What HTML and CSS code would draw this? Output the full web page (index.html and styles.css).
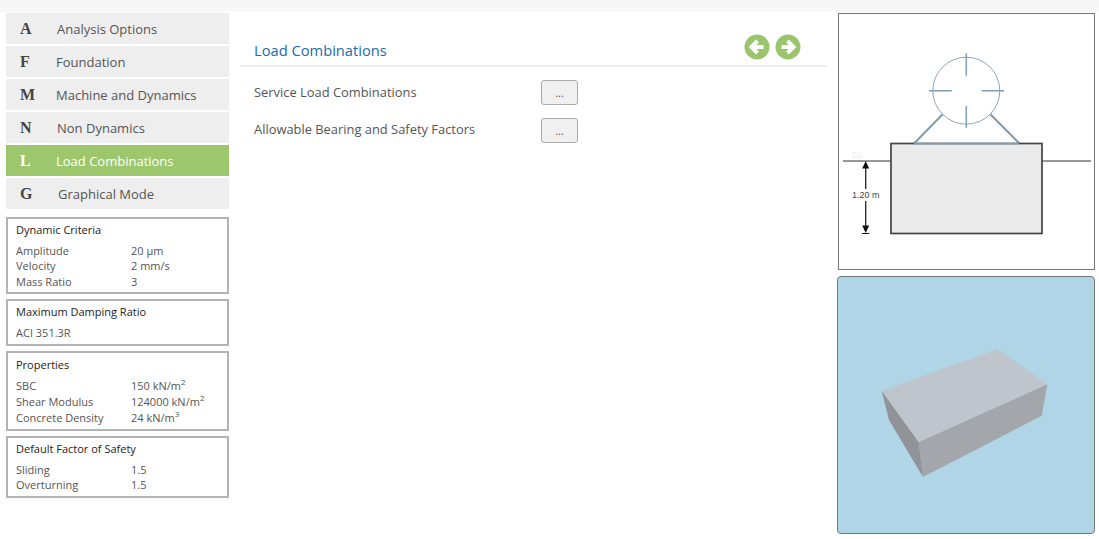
FILE: index.html
```html
<!DOCTYPE html>
<html lang="en">
<head>
  <meta charset="UTF-8">
  <title>Load Combinations</title>
  <link rel="stylesheet" href="styles.css">
</head>
<body>
  <div class="top-strip"></div>
  <div class="page">
    <div class="sidebar">
      <ul class="menu">
        <li class="menu-item"><b>A</b><span class="nudge-1">Analysis Options</span></li>
        <li class="menu-item"><b>F</b><span>Foundation</span></li>
        <li class="menu-item"><b>M</b><span>Machine and Dynamics</span></li>
        <li class="menu-item"><b>N</b><span class="nudge-1">Non Dynamics</span></li>
        <li class="menu-item active"><b>L</b><span>Load Combinations</span></li>
        <li class="menu-item"><b>G</b><span class="nudge-2">Graphical Mode</span></li>
      </ul>

      <div class="panel">
        <h4>Dynamic Criteria</h4>
        <div class="props">
          <span>Amplitude</span><span>20 µm</span>
          <span>Velocity</span><span>2 mm/s</span>
          <span>Mass Ratio</span><span>3</span>
        </div>
      </div>
      <div class="panel">
        <h4>Maximum Damping Ratio</h4>
        <div class="props">
          <span>ACI 351.3R</span>
        </div>
      </div>
      <div class="panel panel-units">
        <h4>Properties</h4>
        <div class="props">
          <span>SBC</span><span>150 kN/m<sup>2</sup></span>
          <span>Shear Modulus</span><span>124000 kN/m<sup>2</sup></span>
          <span>Concrete Density</span><span>24 kN/m<sup>3</sup></span>
        </div>
      </div>
      <div class="panel">
        <h4>Default Factor of Safety</h4>
        <div class="props">
          <span>Sliding</span><span>1.5</span>
          <span>Overturning</span><span>1.5</span>
        </div>
      </div>
    </div>

    <div class="main">
      <div class="main-head">
        <h2>Load Combinations</h2>
        <div class="nav-arrows">
          <svg class="nav-icon" viewBox="0 0 26 26"><circle cx="13" cy="13" r="12.5" fill="#9bc56c"/><path d="M19.5 13H8M13.5 7L7.5 13L13.5 19" fill="none" stroke="#fff" stroke-width="4"/></svg>
          <svg class="nav-icon" viewBox="0 0 26 26"><circle cx="13" cy="13" r="12.5" fill="#9bc56c"/><path d="M6.5 13H18M12.5 7L18.5 13L12.5 19" fill="none" stroke="#fff" stroke-width="4"/></svg>
        </div>
      </div>
      <div class="form-row">
        <label>Service Load Combinations</label>
        <button class="dots">...</button>
      </div>
      <div class="form-row">
        <label>Allowable Bearing and Safety Factors</label>
        <button class="dots">...</button>
      </div>
    </div>

    <div class="views">
      <div class="view-2d">
        <svg viewBox="839 14 255 255" width="255" height="255">
          <circle cx="966.3" cy="90.7" r="33.5" fill="none" stroke="#8ba5b8" stroke-width="1"/>
          <path d="M966.3 53.3V75.7M966.3 106V127.7M929 90.7H951.7M981.7 90.7H1004" fill="none" stroke="#7f9db3" stroke-width="1.5"/>
          <path d="M942.7 114.3L914.3 143.3M990.3 114.3L1019.3 143.3" fill="none" stroke="#7f9db3" stroke-width="2"/>
          <path d="M843 161H891M1042 161H1091" stroke="#333" stroke-width="1"/>
          <rect x="891" y="143.5" width="151" height="90" fill="#ebebeb" stroke="#444" stroke-width="1.7"/>
          <path d="M914 143.5H1019" stroke="#7f9db3" stroke-width="1.5"/>
          <text x="852" y="158" class="gl">GL</text>
          <path d="M865.7 165V230" stroke="#222" stroke-width="1.3"/>
          <path d="M865.7 161L869.2 168.5H862.2ZM865.7 233L869.2 225.5H862.2Z" fill="#111"/>
          <path d="M862 233.5H869.4" stroke="#111" stroke-width="1"/>
          <rect x="851" y="189" width="30" height="12" fill="#fff"/>
          <text x="852" y="198" class="dim">1.20 m</text>
        </svg>
      </div>
      <div class="view-3d">
        <svg viewBox="838 277 256 256" width="256" height="256">
          <path d="M881.7 391L997.7 349L1047.3 384.3L918.7 442.3Z" fill="#bfc5cd"/>
          <path d="M918.7 442.3L1047.3 384.3L1041.7 415.7L923 477Z" fill="#a3a6aa"/>
          <path d="M881.7 391L918.7 442.3L923 477L889 420Z" fill="#909397"/>
        </svg>
      </div>
    </div>
  </div>
</body>
</html>
```

FILE: styles.css
```css
* {
  box-sizing: border-box;
}
body {
  margin: 0;
  background-color: #ffffff;
  color: #555555;
  font-family: "Open Sans", sans-serif;
  overflow: hidden;
}
.top-strip {
  height: 12px;
  background-color: #f7f7f7;
}
.page {
  display: flex;
  align-items: flex-start;
}

/* Left column */
.sidebar {
  width: 223px;
  margin-left: 6px;
  padding-top: 1px;
}
.menu {
  list-style: none;
  margin: 0 0 7.5px;
  padding: 0;
  display: flex;
  flex-direction: column;
  gap: 2px;
}
.menu-item {
  height: 31px;
  display: flex;
  align-items: center;
  background-color: #eeeeee;
  font-size: 13px;
}
.menu-item b {
  width: 50px;
  padding-left: 14px;
  font-family: "Liberation Serif", serif;
  font-size: 16px;
  color: #444444;
}
.menu-item.active {
  background-color: #9dc76c;
  color: #ffffff;
}
.menu-item.active b {
  color: #ffffff;
}
.nudge-1 {
  margin-left: 1px;
}
.nudge-2 {
  margin-left: 2px;
}

.panel {
  border: 2px solid #b4b4b4;
  padding: 3px 8px;
  margin-bottom: 5px;
  font-size: 11px;
  line-height: 15.5px;
}
.panel h4 {
  margin: 0 0 5px;
  font-size: 11px;
  font-weight: 400;
  color: #222222;
  line-height: 16px;
}
.panel-units {
  padding-top: 4px;
  line-height: 16px;
}
.props {
  display: grid;
  grid-template-columns: 115px 1fr;
}
.props sup {
  font-size: 8px;
  line-height: 0;
}

/* Centre */
.main {
  width: 587px;
  margin-left: 11px;
}
.main-head {
  height: 55px;
  padding: 22px 26px 0 14px;
  display: flex;
  justify-content: space-between;
  border-bottom: 2px solid #eeeeee;
}
.main-head h2 {
  margin: 6px 0 0;
  font-size: 14.7px;
  font-weight: 400;
  line-height: 20px;
  color: #1b6cb0;
}
.nav-arrows {
  display: flex;
  gap: 5px;
}
.nav-icon {
  width: 26px;
  height: 26px;
}
.form-row {
  height: 37.5px;
  padding-left: 14px;
  display: flex;
  align-items: center;
  font-size: 12.9px;
}
.form-row:nth-child(2) {
  margin-top: 7px;
}
.form-row label {
  width: 287px;
  margin-top: -2px;
}
.dots {
  width: 37px;
  height: 25px;
  padding: 0;
  background-color: #f0f0f0;
  border: 1px solid #aaaaaa;
  border-radius: 3px;
  color: #555555;
  font-family: "Open Sans", sans-serif;
  font-size: 11px;
}

/* Right column */
.views {
  width: 258px;
  margin-left: 10px;
  padding-top: 1px;
}
.view-2d {
  width: 257px;
  height: 257px;
  margin-left: 1px;
  border: 1px solid #777777;
}
.view-2d svg,
.view-3d svg {
  display: block;
}
.view-3d {
  width: 258px;
  height: 258px;
  margin-top: 6px;
  background-color: #afd5e6;
  border: 1px solid #777777;
  border-radius: 4px;
}
.dim {
  font-family: "Liberation Sans", sans-serif;
  font-size: 9px;
  fill: #444444;
}
.gl {
  font-family: "Liberation Sans", sans-serif;
  font-size: 9px;
  fill: #eeeeee;
}
```
